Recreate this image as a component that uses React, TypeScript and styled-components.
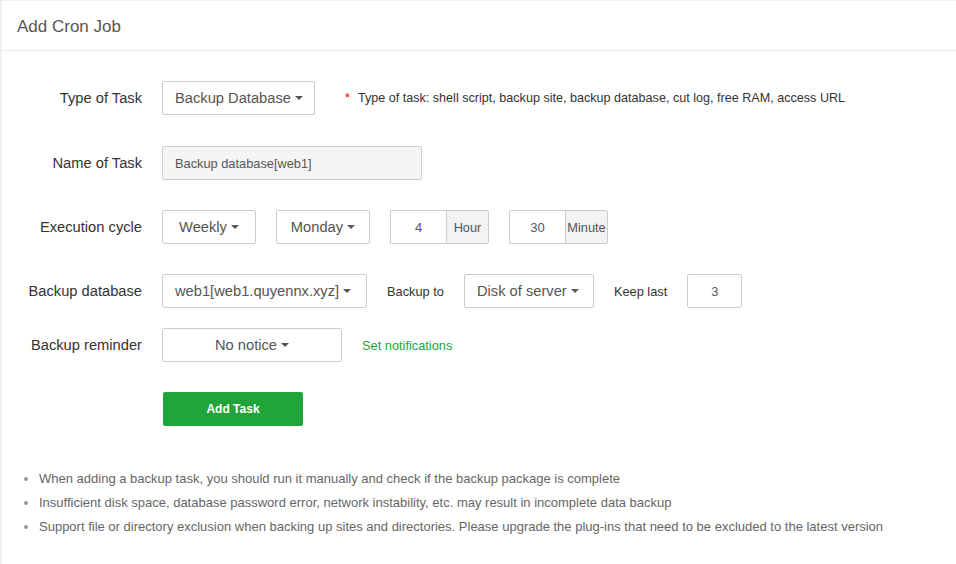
import { createGlobalStyle, styled } from 'styled-components';

const GlobalStyle = createGlobalStyle`
  html, body {
    margin: 0;
    padding: 0;
    background: #f0f0f0;
    font-family: "Liberation Sans", Arial, sans-serif;
    color: #333;
  }
  * { box-sizing: border-box; }
`;

const Panel = styled.div`
  margin: 1px 0 0 2px;
  background: #fff;
  min-height: 600px;
`;

const Header = styled.div`
  height: 50px;
  padding: 3px 15px 0;
  display: flex;
  align-items: center;
  border-bottom: 1px solid #e9e9e9;
  font-size: 17px;
  color: #555;
`;

const Body = styled.div`
  padding-top: 30px;
`;

const Row = styled.div<{ $gap?: number }>`
  display: flex;
  align-items: center;
  height: 34px;
  margin-bottom: ${(p) => (p.$gap ?? 30)}px;
  &:first-child {
    margin-bottom: 31px;
  }
`;

const Label = styled.label`
  width: 140px;
  margin-right: 20px;
  text-align: right;
  font-size: 14.7px;
  color: #333;
`;

const Select = styled.div<{ $width?: number; $center?: boolean }>`
  height: 34px;
  width: ${(p) => (p.$width ? `${p.$width}px` : 'auto')};
  padding: 0 12px;
  border: 1px solid #ccc;
  border-radius: 2px;
  display: flex;
  align-items: center;
  justify-content: ${(p) => (p.$center ? 'center' : 'flex-start')};
  font-size: 14.7px;
  color: #555;
  background: #fff;
  margin-right: 20px;
  white-space: nowrap;
`;

const Caret = styled.span`
  display: inline-block;
  width: 0;
  height: 0;
  margin-left: 4px;
  border-top: 4px solid #555;
  border-left: 4px solid transparent;
  border-right: 4px solid transparent;
`;

const Note = styled.span`
  margin-left: 10px;
  font-size: 12.6px;
  color: #333;
  b {
    color: #f00;
    font-weight: normal;
    margin-right: 8px;
  }
`;

const TextInput = styled.div<{ $width: number; $disabled?: boolean; $center?: boolean }>`
  width: ${(p) => p.$width}px;
  height: 34px;
  border: 1px solid #ccc;
  border-radius: 2px;
  background: ${(p) => (p.$disabled ? '#f5f5f5' : '#fff')};
  display: flex;
  align-items: center;
  justify-content: ${(p) => (p.$center ? 'center' : 'flex-start')};
  padding: 0 12px;
  font-size: 12.8px;
  color: #555;
`;

const Group = styled.div`
  display: flex;
  height: 34px;
  margin-right: 20px;
`;

const GroupInput = styled.div`
  width: 56px;
  border: 1px solid #ccc;
  border-right: none;
  border-radius: 2px 0 0 2px;
  display: flex;
  align-items: center;
  justify-content: center;
  font-size: 13px;
  color: #555;
`;

const Addon = styled.div`
  width: 43px;
  border: 1px solid #ccc;
  border-radius: 0 2px 2px 0;
  background: #f3f3f3;
  display: flex;
  align-items: center;
  justify-content: center;
  font-size: 12.8px;
  color: #555;
  white-space: nowrap;
`;

const SideText = styled.span`
  font-size: 12.8px;
  color: #333;
  margin-right: 20px;
`;

const LinkText = styled.a`
  font-size: 12.8px;
  color: #20a53a;
  text-decoration: none;
  cursor: pointer;
`;

const Submit = styled.button`
  margin-left: 161px;
  width: 140px;
  height: 34px;
  border: none;
  border-radius: 2px;
  background: #20a53a;
  color: #fff;
  font-family: inherit;
  font-size: 12px;
  font-weight: bold;
  cursor: pointer;
`;

const Tips = styled.ul`
  margin: 41px 0 0;
  padding: 0 0 0 37px;
  list-style: disc;
  li {
    font-size: 13px;
    line-height: 24px;
    color: #666;
  }
  li::marker {
    color: #999;
  }
`;

const tips = [
  'When adding a backup task, you should run it manually and check if the backup package is complete',
  'Insufficient disk space, database password error, network instability, etc. may result in incomplete data backup',
  'Support file or directory exclusion when backing up sites and directories. Please upgrade the plug-ins that need to be excluded to the latest version',
];

function DropDown({ text, width, center }: { text: string; width?: number; center?: boolean }) {
  return (
    <Select $width={width} $center={center}>
      {text}
      <Caret />
    </Select>
  );
}

export default function App() {
  return (
    <>
      <GlobalStyle />
      <Panel>
        <Header>Add Cron Job</Header>
        <Body>
          <Row>
            <Label>Type of Task</Label>
            <DropDown text="Backup Database" width={153} />
            <Note>
              <b>*</b>Type of task: shell script, backup site, backup database, cut log, free RAM, access URL
            </Note>
          </Row>
          <Row>
            <Label>Name of Task</Label>
            <TextInput $width={260} $disabled>
              Backup database[web1]
            </TextInput>
          </Row>
          <Row>
            <Label>Execution cycle</Label>
            <DropDown text="Weekly" width={94} center />
            <DropDown text="Monday" width={94} center />
            <Group>
              <GroupInput>4</GroupInput>
              <Addon>Hour</Addon>
            </Group>
            <Group>
              <GroupInput>30</GroupInput>
              <Addon>Minute</Addon>
            </Group>
          </Row>
          <Row $gap={20}>
            <Label>Backup database</Label>
            <DropDown text="web1[web1.quyennx.xyz]" width={205} />
            <SideText>Backup to</SideText>
            <DropDown text="Disk of server" width={130} />
            <SideText>Keep last</SideText>
            <TextInput $width={55} $center>
              3
            </TextInput>
          </Row>
          <Row>
            <Label>Backup reminder</Label>
            <DropDown text="No notice" width={180} center />
            <LinkText>Set notifications</LinkText>
          </Row>
          <Submit>Add Task</Submit>
          <Tips>
            {tips.map((t) => (
              <li key={t}>{t}</li>
            ))}
          </Tips>
        </Body>
      </Panel>
    </>
  );
}
